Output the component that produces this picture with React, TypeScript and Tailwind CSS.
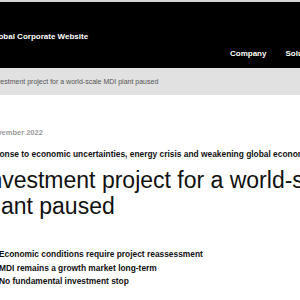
import React from "react";

export default function App() {
  return (
    <div className="w-[300px] h-[300px] overflow-hidden bg-white font-['Liberation_Sans',Arial,sans-serif] whitespace-nowrap">
      <div className="h-[2px] bg-[#d4d4d4]" />
      <header className="h-[66px] bg-black flex flex-col">
        <div className="mt-[29px] ml-[-10px] text-[8px] leading-[12px] font-bold text-white">
          Global Corporate Website
        </div>
        <nav className="mt-[5px] ml-[230px] flex gap-[19px] text-[8px] leading-[12px] font-bold text-white">
          <span>Company</span>
          <span>Solutions</span>
          <span>Products</span>
        </nav>
      </header>
      <div className="h-[27px] bg-[#e1e1e1] flex items-center">
        <span className="ml-[-9px] text-[7px] leading-[12px] text-[#555555]">
          Investment project for a world-scale MDI plant paused
        </span>
      </div>
      <main className="flex flex-col">
        <div className="mt-[32px] ml-[-23px] text-[7.5px] leading-[12px] font-bold text-[#9a9a9a]">
          17 November 2022
        </div>
        <div className="mt-[9px] ml-[-28px] text-[8.4px] leading-[12px] font-bold text-[#111111]">
          In response to economic uncertainties, energy crisis and weakening global economy
        </div>
        <h1 className="mt-[7px] ml-[-17px] text-[23px] leading-[26px] font-normal text-[#111111]">
          Investment project for a world-scale MDI
          <br />
          plant paused
        </h1>
        <ul className="mt-[29px] ml-[-1px] flex flex-col text-[8.4px] leading-[13.5px] font-bold text-[#111111]">
          <li>Economic conditions require project reassessment</li>
          <li>MDI remains a growth market long-term</li>
          <li>No fundamental investment stop</li>
        </ul>
      </main>
    </div>
  );
}
